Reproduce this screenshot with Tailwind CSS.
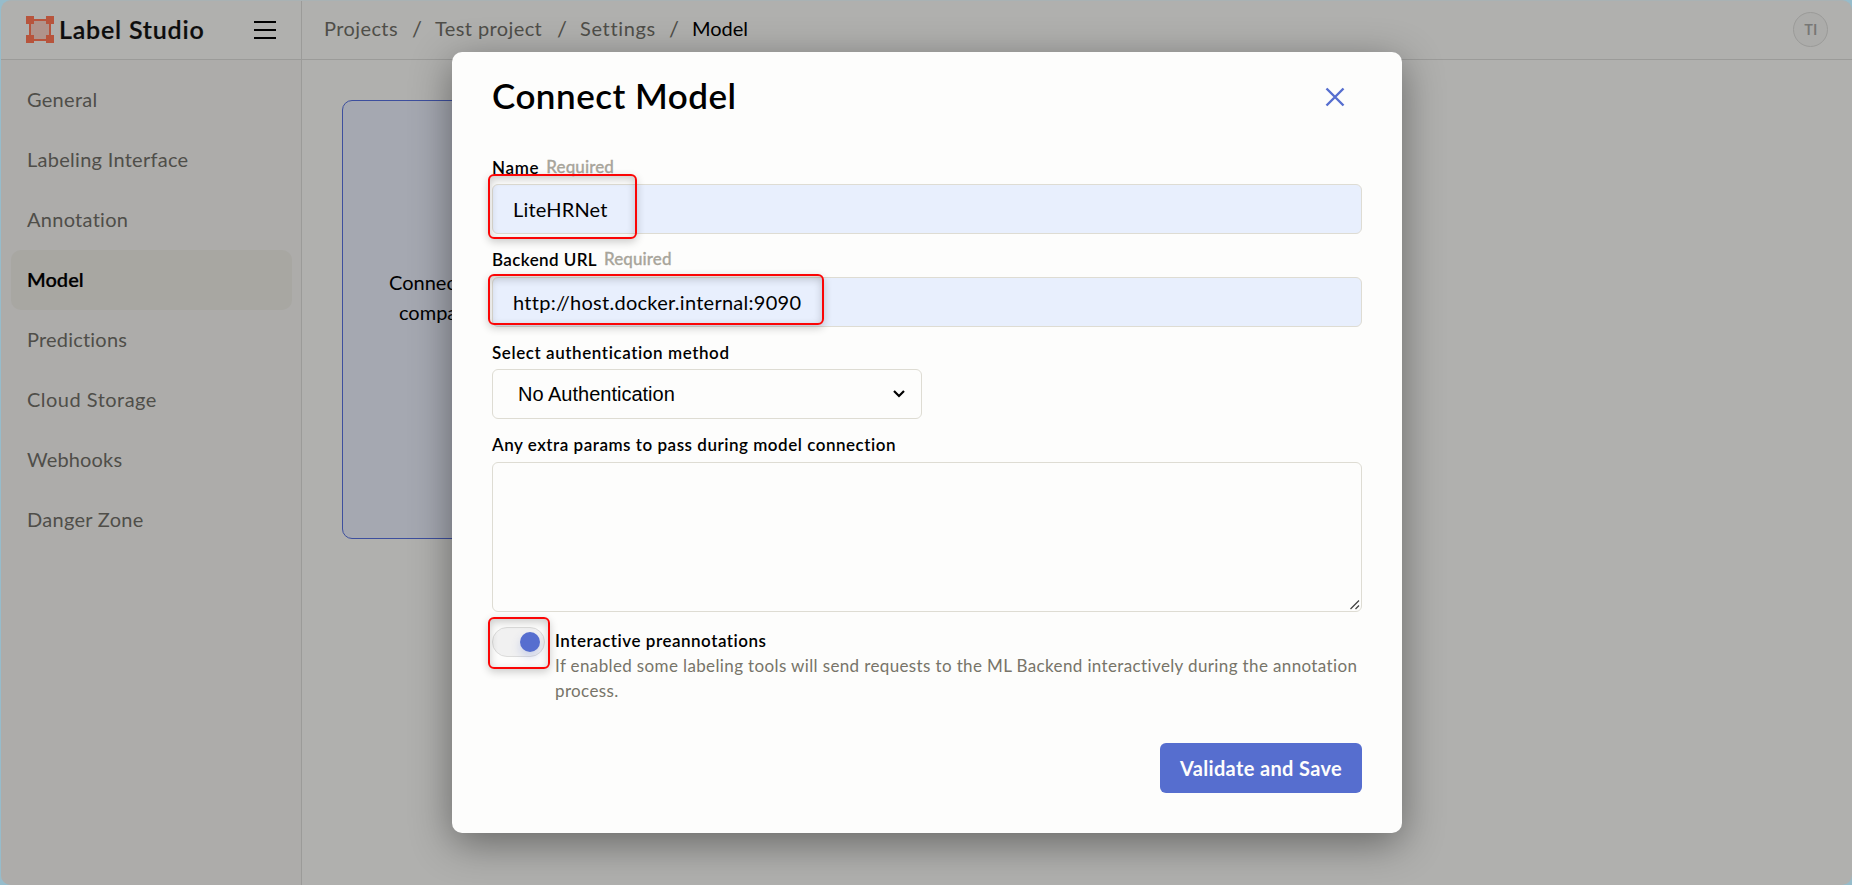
<!DOCTYPE html>
<html lang="en">
<head>
<meta charset="utf-8">
<title>Label Studio</title>
<script src="https://cdn.jsdelivr.net/npm/@tailwindcss/browser@4"></script>
</head>
<body class="h-[885px] w-[1852px] overflow-hidden bg-[#96bccb] font-['Lato',sans-serif] text-[20px] text-black">
<div class="relative h-[885px] pl-px">
  <div class="flex h-[885px] flex-col overflow-hidden rounded-[10px] border-t border-[#a9b2b4] bg-[#b0b0ae]">
    <header class="flex h-[59px] shrink-0 border-b border-[#9b9b99]">
      <div class="flex w-[301px] shrink-0 items-center justify-between border-r border-[#9b9b99] pr-[25px] pl-[25px]">
        <div class="flex items-center gap-[5px]">
          <svg class="size-[28px]" viewBox="0 0 28 28">
            <rect x="4" y="4" width="20" height="20" fill="#b0938b" stroke="#b7543c" stroke-width="2"/>
            <path fill="#b7543c" d="M0 0h8v8H0zM20 0h8v8h-8zM0 19h8v8H0zM20 19h8v8h-8z"/>
          </svg>
          <span class="pb-0.5 text-[25px] leading-[30px] font-semibold tracking-[0.8px] text-[#0d0d0d] [-webkit-text-stroke:0.2px_#0d0d0d]">Label Studio</span>
        </div>
        <div class="flex flex-col gap-[6px]">
          <div class="h-[2px] w-[22px] bg-black"></div>
          <div class="h-[2px] w-[22px] bg-black"></div>
          <div class="h-[2px] w-[22px] bg-black"></div>
        </div>
      </div>
      <nav class="flex grow items-center pb-1 pl-[22px] text-[#4f4e49]">
        <span class="w-[88px] tracking-[0.4px]">Projects</span>
        <span class="w-[23px] text-[22px]">/</span>
        <span class="w-[122px] tracking-[0.4px]">Test project</span>
        <span class="w-[23px] text-[22px]">/</span>
        <span class="w-[89px] tracking-[0.65px]">Settings</span>
        <span class="w-[23px] text-[22px]">/</span>
        <span class="text-black">Model</span>
      </nav>
      <div class="mt-[11px] mr-[24px] flex size-[35px] items-center justify-center rounded-full border border-[#9b9b99] bg-[#acacaa] pb-px font-['Inter',sans-serif] text-[14px] font-semibold text-[#777775]">TI</div>
    </header>
    <div class="flex grow">
      <aside class="w-[301px] shrink-0 border-r border-[#9b9b99] bg-[#adacaa] px-[10px] pt-[10px] tracking-[0.28px] text-[#4f4e49]">
        <div class="flex h-[60px] items-center px-[16px] pb-0.5">General</div>
        <div class="flex h-[60px] items-center px-[16px] pb-0.5">Labeling Interface</div>
        <div class="flex h-[60px] items-center px-[16px] pb-0.5">Annotation</div>
        <div class="mr-[-1px] flex h-[60px] items-center rounded-[10px] bg-[#a8a7a2] px-[16px] pb-0.5 font-semibold tracking-normal text-black [-webkit-text-stroke:0.2px_#000]">Model</div>
        <div class="flex h-[60px] items-center px-[16px] pb-0.5 tracking-[0.2px]">Predictions</div>
        <div class="flex h-[60px] items-center px-[16px] pb-0.5 tracking-[0.48px]">Cloud Storage</div>
        <div class="flex h-[60px] items-center px-[16px] pb-0.5 tracking-[0.15px]">Webhooks</div>
        <div class="flex h-[60px] items-center px-[16px] pb-0.5">Danger Zone</div>
      </aside>
      <main class="grow pt-[40px] pl-[40px]">
        <div class="h-[439px] w-[380px] rounded-[10px] border border-[#3d4f9e] bg-[#a5a8b1] pt-[166px] leading-[30px] whitespace-nowrap">
          <div class="pl-[46px]">Connec</div>
          <div class="pl-[56px]">compa</div>
        </div>
      </main>
    </div>
  </div>

  <section class="absolute top-[52px] left-[452px] flex h-[781px] w-[950px] flex-col rounded-[10px] bg-[#fdfdfc] px-[40px] pb-[40px] shadow-[0_10px_40px_rgba(0,0,0,0.42)]">
    <div class="flex h-[89px] shrink-0 items-center justify-between pr-[17px]">
      <h1 class="pb-[3px] text-[35px] leading-[42px] font-semibold tracking-[0.5px]">Connect Model</h1>
      <svg class="size-[20px]" viewBox="0 0 20 20" fill="none" stroke="#566ecf" stroke-width="2.4"><path d="M1.5 1.5l17 17M18.5 1.5l-17 17"/></svg>
    </div>
    <div class="flex h-[43px] shrink-0 items-center gap-[7px] pt-[10px] text-[17px] leading-[20px]">
      <span class="font-semibold tracking-[0.7px]">Name</span><span class="pb-px font-medium tracking-[0.1px] text-[#a8a59b] [-webkit-text-stroke:0.3px_#a8a59b]">Required</span>
    </div>
    <div class="flex h-[50px] shrink-0 items-center rounded-[6px] border border-[#dedcd3] bg-[#e8effd] px-[20px] pb-px tracking-[0.2px]">LiteHRNet</div>
    <div class="flex h-[43px] shrink-0 items-center gap-[7px] pt-[8px] text-[17px] leading-[20px]">
      <span class="font-semibold tracking-[0.4px]">Backend URL</span><span class="pb-px font-medium tracking-[0.1px] text-[#a8a59b] [-webkit-text-stroke:0.3px_#a8a59b]">Required</span>
    </div>
    <div class="flex h-[50px] shrink-0 items-center rounded-[6px] border border-[#dedcd3] bg-[#e8effd] px-[20px] pb-px tracking-[0.27px]">http://host.docker.internal:9090</div>
    <div class="flex h-[42px] shrink-0 items-center pt-[9px] text-[17px] leading-[20px] font-semibold tracking-[0.58px]">Select authentication method</div>
    <div class="flex h-[50px] w-[430px] shrink-0 items-center justify-between rounded-[6px] border border-[#dedcd3] pr-[16px] pb-px pl-[25px] font-['Liberation_Sans',sans-serif]">
      <span>No Authentication</span>
      <svg class="h-[8px] w-[12px]" viewBox="0 0 12 8" fill="none" stroke="#000" stroke-width="2.2"><path d="M1 1l5 5 5-5"/></svg>
    </div>
    <div class="flex h-[43px] shrink-0 items-center pt-[9px] text-[17px] leading-[20px] font-semibold tracking-[0.52px]">Any extra params to pass during model connection</div>
    <div class="flex h-[150px] shrink-0 items-end justify-end rounded-[6px] border border-[#dedcd3] p-px">
      <svg class="size-[10px]" viewBox="0 0 10 10" fill="none" stroke="#444" stroke-width="1.3"><path d="M0.5 9L9 0.5M5.5 9L9 5.5"/></svg>
    </div>
    <div class="flex shrink-0 gap-[10px] pt-[15px]">
      <div class="flex h-[30px] w-[53px] shrink-0 items-center justify-end rounded-full border border-[#dcdcdb] bg-[#f1f1f1] pr-[4px]">
        <div class="size-[20px] rounded-full bg-[#566ecf] shadow-[0_5px_10px_rgba(86,110,207,0.25)]"></div>
      </div>
      <div class="pt-[1px] text-[17px] leading-[25px] tracking-[0.37px] whitespace-nowrap text-[#777469]">
        <div class="font-semibold tracking-[0.52px] text-black">Interactive preannotations</div>
        <div>If enabled some labeling tools will send requests to the ML Backend interactively during the annotation<br>process.</div>
      </div>
    </div>
    <button class="mt-auto flex h-[50px] w-[202px] shrink-0 items-center justify-center self-end rounded-[6px] bg-[#566ecf] pb-px font-bold tracking-[0.35px] text-[#fdfdfc]">Validate and Save</button>
  </section>

  <div class="absolute top-[174px] left-[487.5px] h-[65px] w-[149px] rounded-[6px] border-2 border-[#fb0505] shadow-[0_3px_8px_rgba(0,0,0,0.2),inset_0_3px_8px_rgba(0,0,0,0.2)]"></div>
  <div class="absolute top-[274px] left-[487.5px] h-[51px] w-[336px] rounded-[6px] border-2 border-[#fb0505] shadow-[0_3px_8px_rgba(0,0,0,0.2),inset_0_3px_8px_rgba(0,0,0,0.2)]"></div>
  <div class="absolute top-[617px] left-[487.5px] h-[52px] w-[62px] rounded-[6px] border-2 border-[#fb0505] shadow-[0_3px_8px_rgba(0,0,0,0.2),inset_0_3px_8px_rgba(0,0,0,0.2)]"></div>
</div>
</body>
</html>
